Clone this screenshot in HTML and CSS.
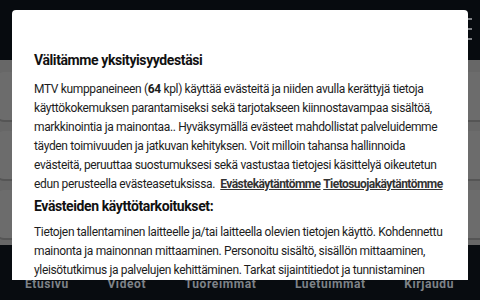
FILE: index.html
```html
<!DOCTYPE html>
<html lang="fi">
<head>
<meta charset="utf-8">
<link rel="stylesheet" href="styles.css">
</head>
<body>
<div class="page">
  <header class="topbar">
    <div class="burger"><span></span><span></span><span></span></div>
  </header>
  <main class="feed">
    <div class="card"></div><div class="card"></div><div class="card"></div>
    <div class="card"></div><div class="card"></div><div class="card"></div>
  </main>
  <nav class="tabs">
    <span>Etusivu</span><span>Videot</span><span>Tuoreimmat</span><span>Luetuimmat</span><span>Kirjaudu</span>
  </nav>
</div>
<div class="modal">
  <h2 class="title">Välitämme yksityisyydestäsi</h2>
  <p class="text">MTV kumppaneineen (<b>64</b> kpl) käyttää evästeitä ja niiden avulla kerättyjä tietoja käyttökokemuksen parantamiseksi sekä tarjotakseen kiinnostavampaa sisältöä, markkinointia ja mainontaa.. Hyväksymällä evästeet mahdollistat palveluidemme täyden toimivuuden ja jatkuvan kehityksen. Voit milloin tahansa hallinnoida evästeitä, peruuttaa suostumuksesi sekä vastustaa tietojesi käsittelyä oikeutetun edun perusteella evästeasetuksissa. &nbsp;<a href="#" class="link">Evästekäytäntömme</a> <a href="#" class="link">Tietosuojakäytäntömme</a></p>
  <h3 class="subtitle">Evästeiden käyttötarkoitukset:</h3>
  <p class="text">Tietojen tallentaminen laitteelle ja/tai laitteella olevien tietojen käyttö. Kohdennettu mainonta ja mainonnan mittaaminen. Personoitu sisältö, sisällön mittaaminen, yleisötutkimus ja palvelujen kehittäminen. Tarkat sijaintitiedot ja tunnistaminen laitetta skannaamalla.</p>
</div>
</body>
</html>
```
FILE: styles.css
```css
* { box-sizing: border-box; }
html, body { margin: 0; padding: 0; }
body {
  width: 480px;
  height: 300px;
  overflow: hidden;
  background: #080c10;
  font-family: Roboto, "Liberation Sans", sans-serif;
  position: relative;
}
.page {
  display: flex;
  flex-direction: column;
  height: 300px;
}
.topbar {
  height: 60px;
  background: #070b0f;
  display: flex;
  justify-content: flex-end;
  padding: 18px 8px 0 0;
}
.burger {
  display: flex;
  flex-direction: column;
  gap: 8px;
  width: 18px;
}
.burger span {
  height: 2px;
  background: #7f8286;
  display: block;
}
.feed {
  height: 185px;
  background: #676767;
  display: grid;
  grid-template-columns: 1fr 1fr;
  gap: 4px 6px;
  padding: 12px 0 0 0;
  margin: 0 -8px 0 -4px;
}
.card {
  height: 48px;
  background: #6c6c6c;
  border-radius: 8px;
  box-shadow: 0 2px 0 #555;
}
.tabs {
  flex: 1;
  background: #080c10;
  display: flex;
  justify-content: space-between;
  align-items: flex-end;
  padding: 0 26px 9px 25px;
  font-weight: 700;
  font-size: 12px;
  letter-spacing: 0.6px;
  color: #7e8388;
}
.modal {
  position: absolute;
  left: 12px;
  top: 10px;
  width: 456px;
  height: 270px;
  overflow: hidden;
  background: #fff;
  border-radius: 4px 4px 0 0;
  padding: 40px 16px 0 22px;
  color: #1d1d1d;
}
.title {
  margin: 0 0 10px;
  font-size: 14px;
  line-height: 20px;
  font-weight: 700;
  letter-spacing: -0.4px;
  color: #111;
}
.text {
  margin: 0;
  font-size: 12px;
  line-height: 19px;
  letter-spacing: -0.35px;
}
.text b { font-weight: 700; }
.link {
  color: #333;
  font-weight: 700;
  text-decoration: underline;
  letter-spacing: -0.55px;
}
.subtitle {
  margin: 2px 0 7px;
  font-size: 14px;
  line-height: 20px;
  font-weight: 700;
  letter-spacing: -0.4px;
  color: #111;
}
```
